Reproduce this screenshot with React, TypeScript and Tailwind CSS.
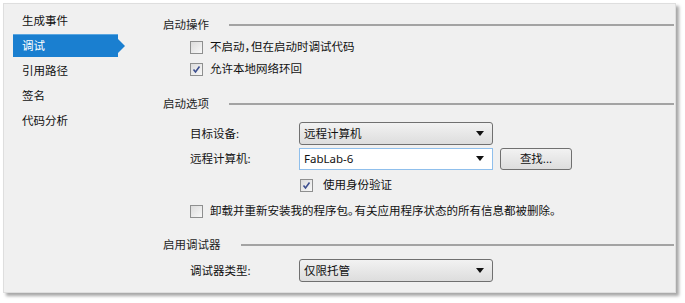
const font = { fontFamily: '"Noto Sans", "Noto Sans CJK SC", sans-serif' };

function Check({ checked }: { checked?: boolean }) {
	return (
		<div className="w-[13px] h-[13px] border border-[#8e8f8f] bg-gradient-to-br from-[#dcdcdc] to-[#f8f8f8] flex items-center justify-center shrink-0">
			{checked && (
				<svg width="9" height="9" viewBox="0 0 9 9">
					<path d="M1.5 4.5 L3.5 7 L7.5 1.5" fill="none" stroke="#3d4f8f" strokeWidth="1.6" />
				</svg>
			)}
		</div>
	);
}

function Arrow() {
	return (
		<svg width="8" height="5" viewBox="0 0 8 5" className="shrink-0">
			<path d="M0 0 H8 L4 5 Z" fill="#111" />
		</svg>
	);
}

// narrow CJK punctuation, as in the original dialog
function P({ c }: { c: string }) {
	return <span className="tracking-[-6px] mr-[1px]">{c}</span>;
}

function Header({ text }: { text: string }) {
	return (
		<div className="h-[16px] flex items-center gap-[20px]">
			<span className="leading-none text-[#1e1e1e]">{text}</span>
			<div className="flex-1 h-[2px] bg-[#a3a3a3]" />
		</div>
	);
}

function Select({ value }: { value: string }) {
	return (
		<div className="w-[194px] h-[23px] rounded-[3px] border border-[#707070] bg-gradient-to-b from-[#f2f2f2] to-[#dddddd] flex items-center justify-between pl-[4px] pr-[8px]">
			<span className="text-[#111]">{value}</span>
			<Arrow />
		</div>
	);
}

const navItems = ["生成事件", "调试", "引用路径", "签名", "代码分析"];

export default function App() {
	return (
		<div className="w-[685px] h-[303px] bg-white pl-[3px] pt-[3px] text-[11.5px]" style={font}>
			<div className="w-[673px] h-[290px] bg-[#f0f0f0] border border-[#dedede] shadow-[3px_3px_3px_rgba(0,0,0,0.35)] flex">
				<div className="w-[159px] pl-[9px] pt-[4px] shrink-0">
					{navItems.map((item) =>
						item === "调试" ? (
							<div key={item} className="h-[25px] flex items-center">
								<div className="h-[23px] w-[105px] bg-[#1a7fd0] text-white flex items-center pl-[9px] border-t border-[#5aa6e0]">
									{item}
								</div>
								<div className="w-0 h-0 border-y-[7px] border-y-transparent border-l-[7px] border-l-[#1a7fd0]" />
							</div>
						) : (
							<div key={item} className="h-[25px] flex items-center pl-[9px] text-[#111]">
								{item}
							</div>
						)
					)}
				</div>

				<div className="flex-1 pt-[13px] pr-[1px] flex flex-col text-[#111]">
					<Header text="启动操作" />
					<div className="pl-[27px] flex flex-col">
						<div className="h-[16px] mt-[6px] flex items-center gap-[7px]">
							<Check />
							<span>
								不启动<P c="，" />但在启动时调试代码
							</span>
						</div>
						<div className="h-[16px] mt-[6px] flex items-center gap-[7px]">
							<Check checked />
							<span>允许本地网络环回</span>
						</div>
					</div>

					<div className="mt-[19px]">
						<Header text="启动选项" />
					</div>
					<div className="pl-[27px] flex flex-col">
						<div className="mt-[10px] flex items-center">
							<span className="w-[109px]">目标设备:</span>
							<Select value="远程计算机" />
						</div>
						<div className="mt-[2px] h-[23px] flex items-center">
							<span className="w-[109px]">远程计算机:</span>
							<div className="w-[194px] h-[22px] bg-white border border-[#8fbfec] flex items-center justify-between pl-[4px] pr-[8px]">
								<span>FabLab-6</span>
								<Arrow />
							</div>
							<div className="ml-[7px] w-[72px] h-[22px] rounded-[3px] border border-[#707070] bg-gradient-to-b from-[#f2f2f2] to-[#dddddd] flex items-center justify-center">
								查找...
							</div>
						</div>
						<div className="mt-[7px] h-[16px] flex items-center pl-[110px] gap-[10px]">
							<Check checked />
							<span>使用身份验证</span>
						</div>
						<div className="mt-[10px] h-[16px] flex items-center gap-[7px]">
							<Check />
							<span>
								卸载并重新安装我的程序包<P c="。" />有关应用程序状态的所有信息都被删除<P c="。" />
							</span>
						</div>
					</div>

					<div className="mt-[18px]">
						<Header text="启用调试器" />
					</div>
					<div className="pl-[27px] flex flex-col">
						<div className="mt-[6px] flex items-center">
							<span className="w-[109px]">调试器类型:</span>
							<Select value="仅限托管" />
						</div>
					</div>
				</div>
			</div>
		</div>
	);
}
